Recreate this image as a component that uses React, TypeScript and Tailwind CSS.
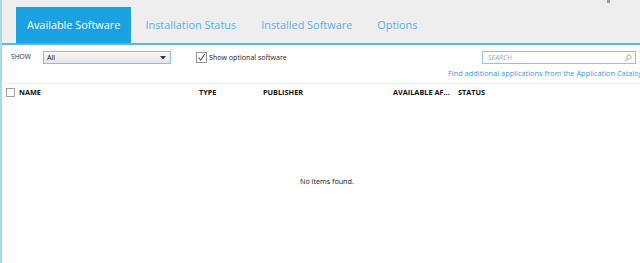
import React from "react";

export default function App() {
  const tabs = ["Available Software", "Installation Status", "Installed Software", "Options"];
  return (
    <div className="w-[640px] h-[263px] bg-white border-l-2 border-[#a3d9f3] flex flex-col overflow-hidden font-['Open_Sans',sans-serif]">
      {/* Tab bar */}
      <div className="relative h-[43px] bg-[#eeeeee] flex items-end pl-[14px] gap-[3px] shrink-0">
        {tabs.map((t, i) => (
          <div
            key={t}
            className={
              i === 0
                ? "h-[36px] px-[11px] flex items-center bg-[#1ba1e2] text-white text-[10.9px] whitespace-nowrap"
                : "h-[36px] px-[11px] flex items-center text-[#56b0e8] text-[10.9px] whitespace-nowrap"
            }
          >
            {t}
          </div>
        ))}
        <span className="absolute top-0 left-[605px] w-[3px] h-[3px] bg-[#a59a90]" />
      </div>
      <div className="h-[2px] bg-[#54b8ea] shrink-0" />

      {/* Controls row */}
      <div className="flex items-center mt-[6px] h-[13px] pl-[9px] pr-[4px]">
        <span className="text-[6.7px] text-[#333] w-[32px]">SHOW</span>
        <div className="w-[128px] h-[13px] border border-[#7cc4ec] bg-gradient-to-b from-[#f8f8f8] to-[#e5e5e5] flex items-center pl-[3px] pr-[4px]">
          <span className="text-[7.2px] text-[#111] flex-1 leading-none">All</span>
          <svg width="6" height="4" viewBox="0 0 6 4">
            <path d="M0 0 L6 0 L3 3.5 Z" fill="#333" />
          </svg>
        </div>
        <div className="ml-[25px] w-[11px] h-[11px] border border-[#9a9a9a] bg-white flex items-center justify-center">
          <svg width="9" height="9" viewBox="0 0 9 9">
            <path d="M1.5 4.5 L3.6 7 L7.8 1" stroke="#555" strokeWidth="1.1" fill="none" />
          </svg>
        </div>
        <span className="ml-[2px] text-[7.1px] text-[#222] whitespace-nowrap">Show optional software</span>
        <div className="flex-1" />
        <div className="w-[154px] h-[13px] border border-[#86c9ec] bg-white flex items-center pl-[5px] pr-[3px]">
          <span className="flex-1 text-[7px] italic text-[#a8a8a8] leading-none">SEARCH</span>
          <svg width="8" height="8" viewBox="0 0 8 8">
            <circle cx="5" cy="3" r="2.2" stroke="#b0b0b0" strokeWidth="1" fill="none" />
            <path d="M3.4 4.6 L0.8 7.2" stroke="#b0b0b0" strokeWidth="1.2" />
          </svg>
        </div>
      </div>

      {/* Link row */}
      <div className="mt-[5px] h-[9px] flex items-center pl-[446px] whitespace-nowrap">
        <span className="text-[7.4px] text-[#3a98d8] leading-none">Find additional applications from the Application Catalog</span>
      </div>

      {/* Separator */}
      <div className="mt-[5px] h-px bg-[#efefef] shrink-0" />

      {/* Header row */}
      <div className="mt-[4px] h-[9px] flex items-center pl-[4px] text-[7.3px] font-bold text-[#111] whitespace-nowrap">
        <div className="w-[9px] h-[9px] border border-[#a0a0a0] bg-white shrink-0" />
        <span className="ml-[4px] w-[180px]">NAME</span>
        <span className="w-[64px]">TYPE</span>
        <span className="w-[130px]">PUBLISHER</span>
        <span className="w-[65px]">AVAILABLE AF...</span>
        <span>STATUS</span>
      </div>

      {/* Empty state */}
      <div className="flex-1 flex items-start pl-[298px] pt-[81px]">
        <span className="text-[7.2px] text-[#111] leading-none">No items found.</span>
      </div>
    </div>
  );
}
